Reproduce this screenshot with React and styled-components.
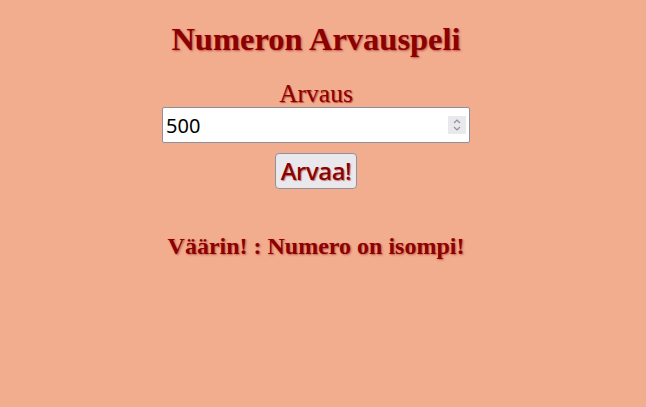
import React, { useState } from "react";
import styled, { createGlobalStyle } from "styled-components";

const Global = createGlobalStyle`
  html, body { margin: 0; padding: 0; background: #f2ac8e; }
  body { font-family: "Liberation Serif", "Times New Roman", serif; }
`;

const Page = styled.main`
  width: 646px;
  height: 407px;
  background: #f2ac8e;
  display: flex;
  flex-direction: column;
  align-items: center;
  padding-top: 20px;
  box-sizing: border-box;
  margin-left: -7px;
`;

const Title = styled.h1`
  margin: 0;
  font-family: "Liberation Serif", serif;
  font-weight: bold;
  font-size: 32.5px;
  line-height: 38px;
  color: #8b0000;
  text-shadow: 1px 1px 2px rgba(139, 0, 0, 0.5);
`;

const Form = styled.form`
  display: flex;
  flex-direction: column;
  align-items: center;
  margin-top: 22px;
`;

const Label = styled.label`
  font-family: "Liberation Serif", serif;
  font-size: 25.5px;
  line-height: 27px;
  color: #8b0000;
  text-shadow: 1px 1px 1px rgba(139, 0, 0, 0.55);
`;

const Field = styled.div`
  display: flex;
  align-items: center;
  width: 308px;
  height: 36px;
  box-sizing: border-box;
  background: #fff;
  border: 1px solid #8f8f9d;
  border-radius: 2px;
  padding: 0 3px 0 3px;
`;

const Input = styled.input`
  flex: 1;
  min-width: 0;
  border: none;
  outline: none;
  background: transparent;
  font-family: "Noto Sans", "Open Sans", sans-serif;
  font-size: 20px;
  color: #000;
  padding: 0;
`;

const Spinner = styled.div`
  width: 18px;
  height: 18px;
  background: #e9e9ed;
  display: flex;
  align-items: center;
  justify-content: center;
`;

const Button = styled.button`
  margin-top: 10px;
  height: 36px;
  padding: 0 5px;
  font-family: "Noto Sans", "Open Sans", sans-serif;
  font-size: 24px;
  font-weight: 500;
  line-height: 32px;
  letter-spacing: -0.3px;
  color: #8b0000;
  background: #e9e9ed;
  border: 1px solid #8f8f9d;
  border-radius: 4px;
  text-shadow: 1px 1px 1px rgba(139, 0, 0, 0.5);
`;

const Result = styled.h2`
  margin: 43px 0 0;
  font-family: "Liberation Serif", serif;
  font-weight: bold;
  font-size: 24px;
  line-height: 28px;
  color: #8b0000;
  text-shadow: 1px 1px 2px rgba(139, 0, 0, 0.45);
`;

export default function App() {
  const [val, setVal] = useState("500");
  return (
    <>
      <Global />
      <Page>
        <Title>Numeron Arvauspeli</Title>
        <Form onSubmit={(e) => e.preventDefault()}>
          <Label htmlFor="guess">Arvaus</Label>
          <Field>
            <Input id="guess" type="text" value={val} onChange={(e) => setVal(e.target.value)} />
            <Spinner>
              <svg width="10" height="14" viewBox="0 0 10 14" fill="none" stroke="#8f8f9d" strokeWidth="1.2">
                <path d="M2 5 L5 2 L8 5" />
                <path d="M2 9 L5 12 L8 9" />
              </svg>
            </Spinner>
          </Field>
          <Button type="submit">Arvaa!</Button>
        </Form>
        <Result>Väärin! : Numero on isompi!</Result>
      </Page>
    </>
  );
}
